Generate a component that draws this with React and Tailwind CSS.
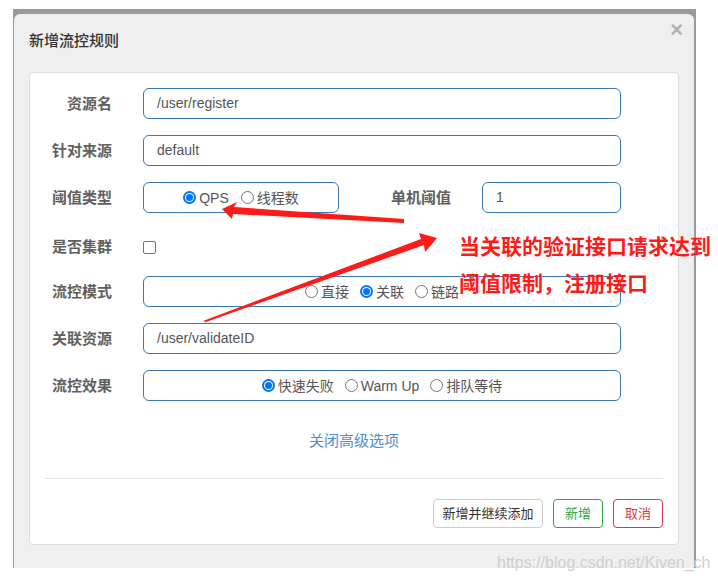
import React from 'react';

const Radio = ({ checked, label }) => (
  <label className="flex items-center gap-[3px]">
    {checked ? (
      <span className="flex h-[13px] w-[13px] items-center justify-center rounded-full bg-[#0075ff]">
        <span className="flex h-[9px] w-[9px] items-center justify-center rounded-full bg-white">
          <span className="h-[7px] w-[7px] rounded-full bg-[#0075ff]" />
        </span>
      </span>
    ) : (
      <span className="h-[13px] w-[13px] rounded-full border border-[#767676] bg-white" />
    )}
    <span className="text-[14px] leading-[20px] text-[#555]">{label}</span>
  </label>
);

const Label = ({ children, className = 'w-[82px]' }) => (
  <div className={`${className} shrink-0 text-right text-[15px] font-bold leading-[20px] text-[#5f5f5f]`}>{children}</div>
);

const Box = ({ children, className = 'flex-1' }) => (
  <div className={`${className} flex h-[31px] items-center rounded-[6px] border border-[#3a79b8] bg-white px-[13px] text-[14px] text-[#555]`}>
    {children}
  </div>
);

export default function App() {
  const rows = [
    { label: '资源名', value: '/user/register' },
    { label: '针对来源', value: 'default' },
  ];

  return (
    <div className="relative h-[580px] w-[718px] overflow-hidden bg-white font-['Liberation_Sans','Noto_Sans_CJK_SC',sans-serif]">
      <div className="ml-[13px] mt-[9px] h-[559px] w-[683px] bg-[#9a9a9a] pl-px pr-[2px] pt-[5px]">
        <div className="h-full rounded-t-[6px] bg-[#efefef]">
          {/* header */}
          <div className="flex h-[58px] items-start justify-between pl-[15px] pr-[11px]">
            <div className="pt-[17px] text-[15px] font-medium leading-[20px] text-[#333]">新增流控规则</div>
            <div className="pt-[5px] text-[22px] font-bold leading-[22px] text-[#b0b0b0]">×</div>
          </div>

          {/* card */}
          <div className="mx-[15px] h-[473px] rounded-[4px] border border-[#dcdcdc] bg-white pr-[57px] pt-[15px]">
            <div className="flex flex-col gap-[16px]">
              {rows.map((r) => (
                <div key={r.label} className="flex h-[31px] items-center gap-[31px]">
                  <Label>{r.label}</Label>
                  <Box>{r.value}</Box>
                </div>
              ))}

              <div className="flex h-[31px] items-center">
                <Label>阈值类型</Label>
                <Box className="ml-[31px] w-[196px] justify-center gap-[12px]">
                  <Radio checked label="QPS" />
                  <Radio label="线程数" />
                </Box>
                <Label className="w-[112px]">单机阈值</Label>
                <Box className="ml-[31px] w-[139px]">1</Box>
              </div>

              <div className="flex h-[31px] items-center gap-[31px] pt-[5px]">
                <Label>是否集群</Label>
                <span className="h-[13px] w-[13px] rounded-[2px] border border-[#767676] bg-white" />
              </div>

              <div className="flex h-[31px] items-center gap-[31px]">
                <Label>流控模式</Label>
                <Box className="flex-1 justify-center gap-[11px]">
                  <Radio label="直接" />
                  <Radio checked label="关联" />
                  <Radio label="链路" />
                </Box>
              </div>

              <div className="flex h-[31px] items-center gap-[31px]">
                <Label>关联资源</Label>
                <Box>/user/validateID</Box>
              </div>

              <div className="flex h-[31px] items-center gap-[31px]">
                <Label>流控效果</Label>
                <Box className="flex-1 justify-center gap-[11px]">
                  <Radio checked label="快速失败" />
                  <Radio label="Warm Up" />
                  <Radio label="排队等待" />
                </Box>
              </div>
            </div>

            <div className="mt-[30px] pl-[57px] text-center text-[15px] leading-[20px] text-[#4a8fd0]">关闭高级选项</div>

            <div className="ml-[15px] mr-[-42px] mt-[27px] border-t border-[#e5e5e5]" />

            <div className="mr-[-42px] mt-[20px] flex justify-end gap-[10px]">
              <button className="h-[29px] w-[110px] rounded-[4px] border border-[#ccc] bg-white text-[13px] text-[#333]">新增并继续添加</button>
              <button className="h-[29px] w-[50px] rounded-[4px] border border-[#28a745] bg-white text-[13px] text-[#28a745]">新增</button>
              <button className="h-[29px] w-[50px] rounded-[4px] border border-[#dc3545] bg-white text-[13px] text-[#dc3545]">取消</button>
            </div>
          </div>
        </div>
      </div>

      {/* annotation arrows */}
      <svg className="pointer-events-none absolute left-0 top-0" width="718" height="580">
        <polygon points="222,209 237,202 234,207 404,219 404,223 233,214 232,219" fill="#ff1a1a" />
        <polygon points="437,238 419,233 421,239 203,321 206,322 424,245 425,252" fill="#ff1a1a" />
      </svg>

      <div className="absolute left-[459px] top-[231px] text-[21px] font-bold leading-[28px] text-[#ff1a1a] font-['Noto_Sans_CJK_SC',sans-serif]">
        当关联的验证接口请求达到
      </div>
      <div className="absolute left-[459px] top-[268px] text-[21px] font-bold leading-[28px] text-[#ff1a1a] font-['Noto_Sans_CJK_SC',sans-serif]">
        阈值限制，注册接口
      </div>

      <div className="absolute left-[497px] top-[553px] text-[16px] leading-[20px] text-[#cfcfcf]">
        https://blog.csdn.net/Kiven_ch
      </div>
    </div>
  );
}
